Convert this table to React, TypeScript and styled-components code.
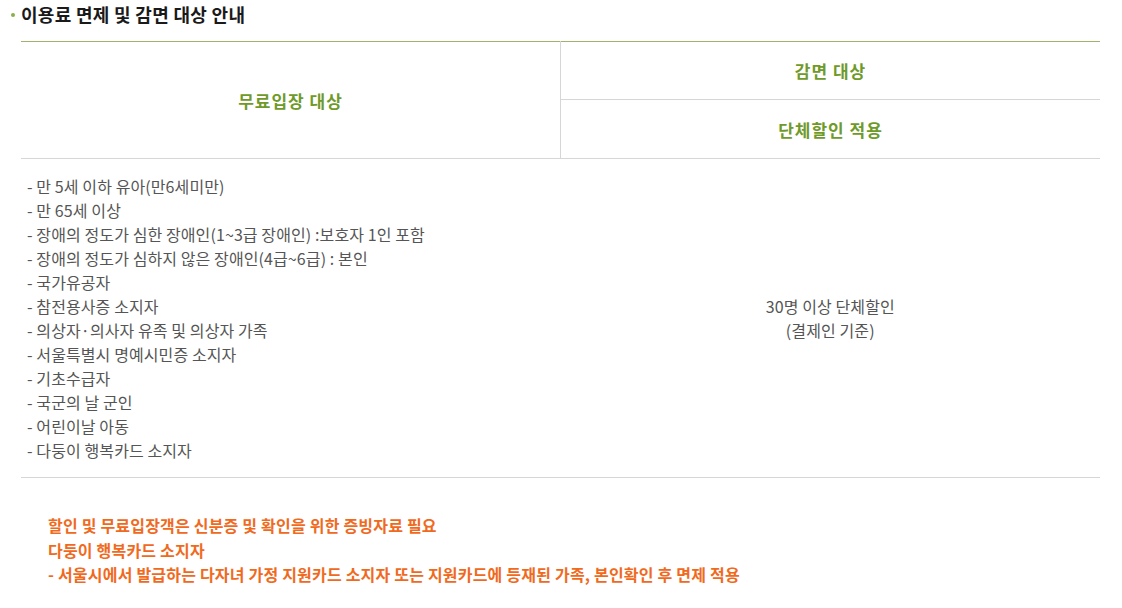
import React from 'react'
import styled, { createGlobalStyle } from 'styled-components'

const GlobalStyle = createGlobalStyle`
  html, body {
    margin: 0;
    padding: 0;
    background: #fff;
  }

  body {
    font-family: 'Noto Sans CJK KR', 'Noto Sans', sans-serif;
  }
`

const Page = styled.div`
  width: 1122px;
  padding: 0 22px 0 21px;
  box-sizing: border-box;
`

const Title = styled.h3`
  margin: 0 0 0 -12px;
  padding: 2px 0 0 2px;
  height: 41px;
  box-sizing: border-box;
  display: flex;
  align-items: flex-start;
  font-size: 18px;
  letter-spacing: 0.3px;
  font-weight: 700;
  color: #1a1a1a;
  line-height: 24px;

  &::before {
    content: '';
    width: 4px;
    height: 4px;
    border-radius: 50%;
    background: #8ab04a;
    margin: 11px 6px 0 0;
  }
`

const Table = styled.table`
  width: 100%;
  border-collapse: collapse;
  border-top: 1px solid #9fb46a;
  table-layout: fixed;
`

const HeadCell = styled.th<{ divided?: boolean; tall?: boolean }>`
  height: ${({ tall }) => (tall ? '58px' : '57px')};
  padding: 0;
  font-size: 17px;
  letter-spacing: 1px;
  font-weight: 700;
  color: #6f9a2a;
  text-align: center;
  vertical-align: middle;
  border-bottom: 1px solid #d6d6d6;
  border-left: ${({ divided }) => (divided ? '1px solid #d6d6d6' : 'none')};
`

const BodyCell = styled.td<{ center?: boolean }>`
  padding: ${({ center }) => (center ? '0' : '15px 6px 15px')};
  font-size: 16px;
  letter-spacing: 0.1px;
  color: #555;
  line-height: 24px;
  text-align: ${({ center }) => (center ? 'center' : 'left')};
  vertical-align: middle;
  border-bottom: 1px solid #d6d6d6;
`

const List = styled.ul`
  margin: 0;
  padding: 0;
  list-style: none;
`

const Notes = styled.div`
  padding: 35px 0 0 27px;
  font-size: 16px;
  letter-spacing: 0.2px;
  font-weight: 700;
  line-height: 24.5px;
  color: #f06a1e;
`

const freeTargets = [
  '만 5세 이하 유아(만6세미만)',
  '만 65세 이상',
  '장애의 정도가 심한 장애인(1~3급 장애인) :보호자 1인 포함',
  '장애의 정도가 심하지 않은 장애인(4급~6급) : 본인',
  '국가유공자',
  '참전용사증 소지자',
  '의상자·의사자 유족 및 의상자 가족',
  '서울특별시 명예시민증 소지자',
  '기초수급자',
  '국군의 날 군인',
  '어린이날 아동',
  '다둥이 행복카드 소지자'
]

const App = () => {
  return (
    <Page>
      <GlobalStyle />
      <Title>이용료 면제 및 감면 대상 안내</Title>

      <Table>
        <thead>
          <tr>
            <HeadCell rowSpan={2}>무료입장 대상</HeadCell>
            <HeadCell divided>감면 대상</HeadCell>
          </tr>
          <tr>
            <HeadCell divided tall>단체할인 적용</HeadCell>
          </tr>
        </thead>
        <tbody>
          <tr>
            <BodyCell>
              <List>
                {freeTargets.map(item => (
                  <li key={item}>- {item}</li>
                ))}
              </List>
            </BodyCell>
            <BodyCell center>
              30명 이상 단체할인
              <br />
              (결제인 기준)
            </BodyCell>
          </tr>
        </tbody>
      </Table>

      <Notes>
        할인 및 무료입장객은 신분증 및 확인을 위한 증빙자료 필요
        <br />
        다둥이 행복카드 소지자
        <br />
        - 서울시에서 발급하는 다자녀 가정 지원카드 소지자 또는 지원카드에 등재된 가족, 본인확인 후 면제 적용
      </Notes>
    </Page>
  )
}

export default App
